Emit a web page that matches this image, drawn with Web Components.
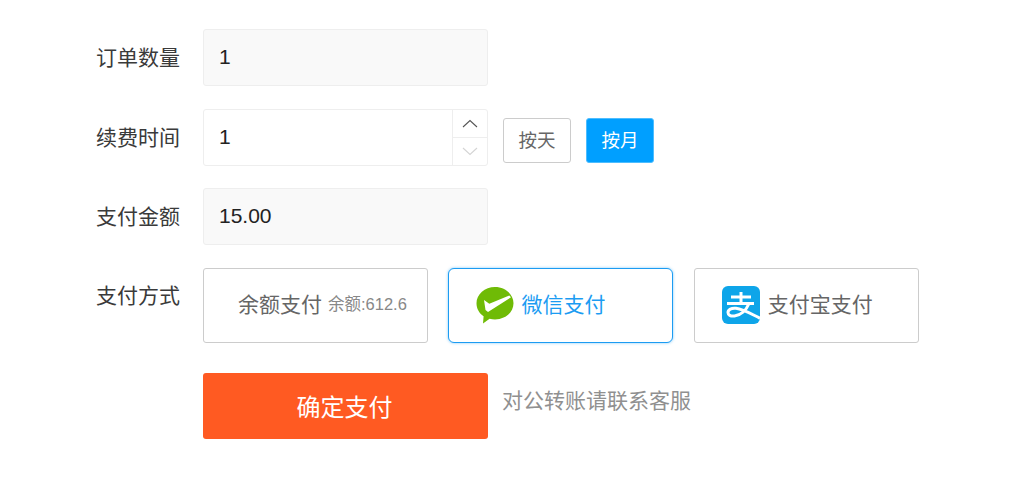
<!DOCTYPE html>
<html lang="zh">
<head>
<meta charset="utf-8">
<title>续费</title>
<style>
  html,body{margin:0;padding:0;background:#fff;}
  body{font-family:"Liberation Sans","Noto Sans CJK SC",sans-serif;color:#333;}
  .page{display:flex;flex-direction:column;gap:22.5px;padding:29.3px 0 0 96px;}
</style>
</head>
<body>
<div class="page">
  <form-row label="订单数量"><text-field value="1"></text-field></form-row>
  <form-row label="续费时间">
    <text-field value="1" stepper></text-field>
    <unit-button>按天</unit-button>
    <unit-button active>按月</unit-button>
  </form-row>
  <form-row label="支付金额"><text-field value="15.00"></text-field></form-row>
  <form-row label="支付方式" class="pay">
    <pay-option style="--pad:34px">余额支付<span slot="note">余额:612.6</span></pay-option>
    <pay-option selected style="--pad:27px;--gap:6px">
      <svg slot="icon" width="39" height="37" viewBox="0 0 39 37">
        <path fill="#6fbb06" d="M19 0C29.200 0 37.500 7.200 37.500 16.300S29.200 32.500 19 32.500c-1.900 0-3.700-.2-5.400-.7L7 36.500l.6-7.200C3.100 26.300.5 21.600.5 16.300.5 7.200 8.800 0 19 0z"/>
        <path fill="#fff" d="M8 13l5.300 3.800L33.300 8.500l1.700 1.800L12 25l-2.500-2z"/>
      </svg>
      微信支付
    </pay-option>
    <pay-option style="--pad:27px;--gap:8px">
      <svg slot="icon" width="38" height="38" viewBox="0 0 38 38">
        <rect width="38" height="38" rx="6" fill="#0ea5e9"/>
        <g fill="none" stroke="#fff" stroke-width="3">
          <path d="M9 11h20"/>
          <path d="M19 6v11"/>
          <path d="M5 17.500h27"/>
          <path d="M27 17.500c-2.500 6-7.500 11.500-14.500 12.500-4 .5-6.500-1-6.500-3.500 0-3 3.500-4.700 8-4.200 7 .7 14 5 24 10"/>
        </g>
      </svg>
      支付宝支付
    </pay-option>
  </form-row>
  <form-row class="submit">
    <submit-button>确定支付</submit-button>
    <span class="tip" style="color:#909090;font-size:21px;margin:16px 0 0 14px;line-height:24px">对公转账请联系客服</span>
  </form-row>
</div>

<template id="form-row-tpl">
  <style>
    :host{display:flex;align-items:flex-start;min-height:57px;}
    .label{width:107px;flex:none;font-size:21px;line-height:57px;color:#3a3a3a;}
    .body{display:flex;align-items:center;gap:15px;}
    :host(.pay) .label{line-height:55px;}
    :host(.pay) .body{gap:20.400px;}
    :host(.submit){margin-top:7.500px;}
    :host(.submit) .body{gap:0;align-items:flex-start;}
  </style>
  <div class="label"></div>
  <div class="body"><slot></slot></div>
</template>

<template id="text-field-tpl">
  <style>
    :host{display:flex;box-sizing:border-box;width:285px;height:57px;border:1px solid #eee;border-radius:3px;background:#f9f9f9;color:#222;}
    :host([stepper]){background:#fff;}
    .value{flex:1;padding-left:15px;font-size:21px;line-height:53px;}
    .steps{display:none;width:34px;flex-direction:column;border-left:1px solid #eee;}
    :host([stepper]) .steps{display:flex;}
    .steps div{flex:1;display:flex;align-items:center;justify-content:center;}
    .steps div+div{border-top:1px solid #eee;}
    svg{display:block;}
  </style>
  <div class="value"></div>
  <div class="steps">
    <div><svg width="16" height="9" viewBox="0 0 16 9"><path d="M1 8l7-6.500L15 8" fill="none" stroke="#555" stroke-width="1.100"/></svg></div>
    <div><svg width="16" height="9" viewBox="0 0 16 9"><path d="M1 1l7 6.500L15 1" fill="none" stroke="#d4d4d4" stroke-width="1.100"/></svg></div>
  </div>
</template>

<template id="unit-button-tpl">
  <style>
    :host{display:flex;align-items:center;justify-content:center;box-sizing:border-box;width:68px;height:45px;border:1px solid #ccc;border-radius:3px;background:#fff;color:#666;font-size:18.500px;margin-top:6px;padding-bottom:2px;}
    :host([active]){background:#009fff;border-color:#4dbdff;color:#fff;}
  </style>
  <slot></slot>
</template>

<template id="pay-option-tpl">
  <style>
    :host{display:flex;align-items:center;box-sizing:border-box;width:225px;height:75px;border:1px solid #ccc;border-radius:3px;background:#fff;color:#666;font-size:21px;padding-left:var(--pad,34px);padding-bottom:4px;white-space:nowrap;}
    :host([selected]){border-color:#1c9cf2;border-radius:6px;box-shadow:0 0 3px rgba(28,156,242,.55);color:#1c9cf2;}
    ::slotted(svg){margin:4px var(--gap,7px) 0 0;flex:none;}
    .note{font-size:16.500px;color:#888;margin-left:6px;}
  </style>
  <slot name="icon"></slot>
  <slot></slot>
  <span class="note"><slot name="note"></slot></span>
</template>

<template id="submit-button-tpl">
  <style>
    :host{display:flex;align-items:center;justify-content:center;box-sizing:border-box;width:285px;height:66px;border-radius:3px;background:#ff5a22;color:#fff;font-size:24px;padding-right:2px;}
  </style>
  <slot></slot>
</template>

<script>
  // 공통: template 복제해서 shadow root 붙이는 베이스
  class Base extends HTMLElement{
    constructor(id){
      super();
      this.attachShadow({mode:'open'});
      this.shadowRoot.appendChild(document.getElementById(id).content.cloneNode(true));
    }
  }
  class FormRow extends Base{
    constructor(){ super('form-row-tpl'); }
    connectedCallback(){
      this.shadowRoot.querySelector('.label').textContent = this.getAttribute('label') || '';
    }
  }
  class TextField extends Base{
    constructor(){ super('text-field-tpl'); }
    connectedCallback(){
      this.shadowRoot.querySelector('.value').textContent = this.getAttribute('value') || '';
    }
  }
  class UnitButton extends Base{ constructor(){ super('unit-button-tpl'); } }
  class PayOption extends Base{ constructor(){ super('pay-option-tpl'); } }
  class SubmitButton extends Base{ constructor(){ super('submit-button-tpl'); } }

  customElements.define('form-row',FormRow);
  customElements.define('text-field',TextField);
  customElements.define('unit-button',UnitButton);
  customElements.define('pay-option',PayOption);
  customElements.define('submit-button',SubmitButton);
</script>
</body>
</html>
